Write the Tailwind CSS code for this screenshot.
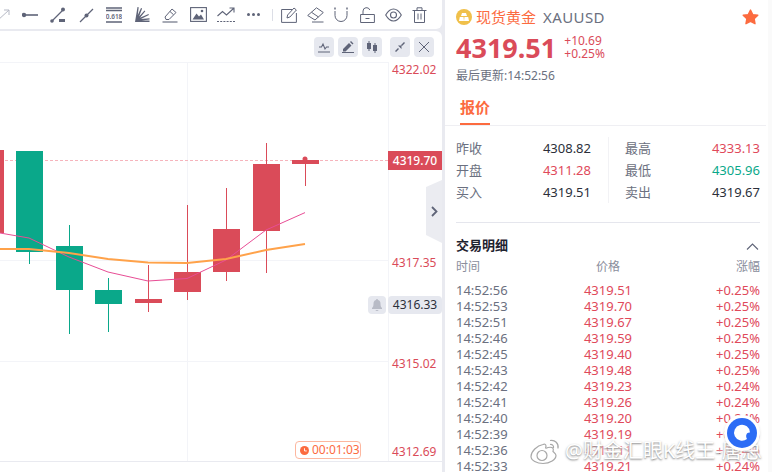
<!DOCTYPE html>
<html lang="zh">
<head>
    <meta charset="UTF-8">
    <title>XAUUSD</title>
    <script src="https://cdn.jsdelivr.net/npm/@tailwindcss/browser@4"></script>
</head>
<body class="w-[772px] h-[472px] overflow-hidden bg-[#fafafa] font-['Noto_Sans','Noto_Sans_CJK_SC',sans-serif]">
<div class="relative flex w-[772px] h-[472px] overflow-hidden">

    <!-- Left: toolbar + chart -->
    <div class="flex flex-col w-[445px] h-full bg-[#e9eaf0] pr-[3px] gap-[2px] shrink-0">
        <!-- Drawing toolbar -->
        <div class="flex items-center h-[29px] bg-white rounded-br-md text-[#5f6478] shrink-0">
            <svg class="w-[16px] h-[16px] ml-[-5px] mr-[5px] text-[#b5b8c4]" viewBox="0 0 16 16" fill="none" stroke="currentColor" stroke-width="1"><path d="M2 14 14 3M9 3h5v5"/></svg>
            <span class="flex justify-center w-[28px]"><svg class="w-[16px] h-[16px]" viewBox="0 0 16 16" fill="none" stroke="currentColor" stroke-width="1.6"><path d="M2 8h14"/><circle cx="2" cy="8" r="1.4" fill="currentColor"/></svg></span>
            <span class="flex justify-center w-[28px]"><svg class="w-[16px] h-[16px]" viewBox="0 0 16 16" fill="none" stroke="currentColor"><path d="M2 14 13 3" stroke-width="1.3"/><circle cx="13" cy="2.5" r="2" fill="currentColor" stroke="none"/><circle cx="2" cy="14" r="1.8" fill="currentColor" stroke="none"/><path d="M9 12h6v3H9z" fill="currentColor" stroke="none"/></svg></span>
            <span class="flex justify-center w-[28px]"><svg class="w-[16px] h-[16px]" viewBox="0 0 16 16" fill="none" stroke="currentColor" stroke-width="1.2"><path d="M2 15 15 2"/><circle cx="8.5" cy="8.5" r="2" fill="currentColor" stroke="none"/></svg></span>
            <span class="flex justify-center w-[28px]"><svg class="w-[16px] h-[16px]" viewBox="0 0 16 16" fill="none"><path d="M0 1h16M0 3.5h16M0 15h16" stroke="currentColor" stroke-width="1.4"/><text x="8" y="12" text-anchor="middle" font-size="6.4" font-weight="600" fill="currentColor" font-family="Noto Sans">0.618</text></svg></span>
            <span class="flex justify-center w-[28px]"><svg class="w-[16px] h-[16px]" viewBox="0 0 16 16" fill="currentColor"><path d="M1 15 3.500 0l1.200.2L3.800 8 7 1l1.100.5-3 8L10.500 3.500l.8.8-5.300 6.400L14.500 7l.4 1-8 4 8.600-.8.1 1.200-8.100 1.100H15.500V15z"/></svg></span>
            <span class="flex justify-center w-[28px]"><svg class="w-[16px] h-[16px]" viewBox="0 0 16 16" fill="none" stroke="currentColor" stroke-width="1"><path d="M3 10 10 2l4 3.500L7 12.500H4z"/><path d="m8 4.500 3.500 3.200" /><path d="M0.500 15h15" stroke-width="1.100"/></svg></span>
            <span class="flex justify-center w-[28px]"><svg class="w-[17px] h-[15px]" viewBox="0 0 17 15" fill="none"><rect x=".6" y=".6" width="15.800" height="13.800" stroke="currentColor" stroke-width="1.100"/><path d="m2.500 12.500 4-6 2.500 3 2-2 3 5z" fill="currentColor"/><circle cx="12" cy="4" r="1.300" fill="currentColor"/></svg></span>
            <span class="flex justify-center w-[28px]"><svg class="w-[18px] h-[16px]" viewBox="0 0 18 16" fill="none" stroke="currentColor" stroke-width="1.100"><path d="M0.500 9 5.500 4.500l4 3.500L16.500 1.500M12.500 1h4.500v4.500"/><path d="M0 14.500h18" stroke-dasharray="2 1.200"/></svg></span>
            <span class="flex justify-center items-center gap-[2px] w-[26px]"><i class="w-[3px] h-[3px] rounded-full bg-[#5f6478]"></i><i class="w-[3px] h-[3px] rounded-full bg-[#5f6478]"></i><i class="w-[3px] h-[3px] rounded-full bg-[#5f6478]"></i></span>
            <i class="w-px h-[12px] bg-[#dcdee6] ml-[6px] mr-[3px]"></i>
            <span class="flex justify-center w-[26px]"><svg class="w-[17px] h-[16px]" viewBox="0 0 17 16" fill="none" stroke="currentColor" stroke-width="1"><path d="M11 2.500H.6v12.900h14.800V6"/><path d="m6 11 .6-3L13 1l2.400 2-6.500 7z"/></svg></span>
            <span class="flex justify-center w-[26px]"><svg class="w-[17px] h-[16px]" viewBox="0 0 17 16" fill="none" stroke="currentColor" stroke-width="1"><path d="M.7 8.500 9.500.8l6.800 4.700-8.300 7.500z"/><path d="m4.500 5.300 7 4.700" /><path d="M5 15h11.500"/></svg></span>
            <span class="flex justify-center w-[26px]"><svg class="w-[14px] h-[15px]" viewBox="0 0 14 15" fill="none" stroke="currentColor" stroke-width="1"><path d="M1 4v4.500a6 6 0 0 0 12 0V4"/><path d="M1 .5v2M13 .5v2" stroke-width="1.400"/></svg></span>
            <span class="flex justify-center w-[26px]"><svg class="w-[15px] h-[16px]" viewBox="0 0 15 16" fill="none" stroke="currentColor" stroke-width="1"><path d="M.6 7.500h13.800v8H.6zM5.500 11.500h4"/><path d="M3 7.500V4a3.500 3.500 0 0 1 6.800-1"/></svg></span>
            <span class="flex justify-center w-[26px]"><svg class="w-[17px] h-[14px]" viewBox="0 0 17 14" fill="none" stroke="currentColor" stroke-width="1.100"><path d="M.7 7C3 3 5.500 1 8.500 1s5.500 2 7.800 6c-2.300 4-4.800 6-7.800 6S3 11 .7 7z"/><circle cx="8.500" cy="7" r="3"/></svg></span>
            <span class="flex justify-center w-[26px]"><svg class="w-[15px] h-[16px]" viewBox="0 0 15 16" fill="none" stroke="currentColor" stroke-width="1"><path d="M.5 3.500h14M5 3.500V.8h5v2.700M2.500 3.500v12h10v-12M6 6.500v6M9 6.500v6"/></svg></span>
        </div>

        <!-- Chart -->
        <div class="relative flex-1 bg-white rounded-tr-md">
            <svg class="absolute inset-0 w-[442px] h-[441px]" viewBox="0 31 442 441" fill="none">
                <path d="M0 62.500H388M0 260.500H388M0 361.500H388M187.500 62V461M388.500 62V461" stroke="#f3f4f8"/>
                <path d="M0 461.500H442" stroke="#e9eaf0"/>
                <path d="M0 160.500H388" stroke="#f6b4bc" stroke-dasharray="3 2"/>
                <!-- down candles -->
                <g fill="#0aa88a">
                    <rect x="16" y="151" width="27" height="101"/><rect x="29" y="252" width="1" height="12"/>
                    <rect x="56" y="246" width="27" height="44"/><rect x="69" y="225" width="1" height="109"/>
                    <rect x="95" y="290" width="27" height="14"/><rect x="108" y="278" width="1" height="54"/>
                </g>
                <!-- up candles -->
                <g fill="#da4b59">
                    <rect x="0" y="150" width="4" height="83"/>
                    <rect x="135" y="299" width="27" height="4"/><rect x="148" y="265" width="1" height="47"/>
                    <rect x="174" y="272" width="27" height="20"/><rect x="187" y="205" width="1" height="95"/>
                    <rect x="213" y="229" width="27" height="43"/><rect x="226" y="188" width="1" height="93"/>
                    <rect x="253" y="164" width="27" height="67"/><rect x="266" y="143" width="1" height="130"/>
                    <rect x="292" y="160" width="27" height="4"/><rect x="305" y="164" width="1" height="22"/>
                    <circle cx="305" cy="159" r="2.500"/>
                </g>
                <polyline points="0,233 29,238 69,257 108,272 148,281 187,278.500 226,260 266,230 305,212.600" stroke="#e84d95" stroke-width="1"/>
                <polyline points="0,249 29,249 69,253 108,259 148,262.500 187,263 226,259 266,250 305,244" stroke="#ffa24a" stroke-width="2"/>
            </svg>

            <!-- Chart buttons -->
            <div class="absolute top-[6px] right-[8px] flex gap-[4px]">
                <span class="flex items-center justify-center w-[20px] h-[20px] rounded bg-[#e6e8ef]"><svg class="w-[12px] h-[12px]" viewBox="0 0 12 12" fill="none" stroke="#5f6478" stroke-width="1.100"><path d="M1 6h2.500l1.500-3 2 5 1.500-2H11M0 11h12"/></svg></span>
                <span class="flex items-center justify-center w-[20px] h-[20px] rounded bg-[#e6e8ef]"><svg class="w-[12px] h-[12px]" viewBox="0 0 12 12" fill="#5f6478"><path d="m1 8 6-6 2.500 2.500-6 6H1zM8 1l1-1 2.500 2.500-1 1zM0 11h12v1H0z"/></svg></span>
                <span class="flex items-center justify-center w-[20px] h-[20px] rounded bg-[#e6e8ef] mr-[4px]"><svg class="w-[14px] h-[14px]" viewBox="0 0 14 14" fill="#5f6478"><path d="M2 3h4v6H2zM3.500 1h1v10h-1zM8 5h4v6H8zM9.500 3h1v10h-1z"/></svg></span>
                <span class="flex items-center justify-center w-[20px] h-[20px] rounded bg-[#e6e8ef]"><svg class="w-[12px] h-[12px]" viewBox="0 0 12 12" fill="#5f6478"><path d="m1 10 3-3 1 1-3 3zM4 4.500 7.500 8v-3.500zM11 2 8 5 7 4l3-3z"/></svg></span>
                <span class="flex items-center justify-center w-[20px] h-[20px] rounded bg-[#e6e8ef]"><svg class="w-[12px] h-[12px]" viewBox="0 0 12 12" fill="none" stroke="#5f6478" stroke-width="1"><path d="m1 1 10 10M11 1 1 11"/></svg></span>
            </div>

            <!-- Price axis -->
            <span class="absolute left-[392px] top-[30px] text-[12px] leading-[18px] text-[#da4b59]">4322.02</span>
            <span class="absolute left-[388px] top-[120px] w-[54px] h-[19px] bg-[#da4b59] text-white text-[12px] leading-[19px] text-center font-medium">4319.70</span>
            <span class="absolute left-[392px] top-[223px] text-[12px] leading-[18px] text-[#da4b59]">4317.35</span>
            <span class="absolute left-[368px] top-[265px] flex items-center justify-center w-[18px] h-[18px] rounded-sm bg-[#e6e8ef]"><svg class="w-[12px] h-[12px]" viewBox="0 0 12 12" fill="#b8bbc6"><path d="M6 0a1 1 0 0 1 1 1c2 .5 2.500 2 2.500 4 0 2 .5 3 1.500 4v1H1V9c1-1 1.500-2 1.500-4 0-2 .5-3.500 2.500-4a1 1 0 0 1 1-1zM4.500 11h3a1.500 1 0 0 1-3 0z"/></svg></span>
            <span class="absolute left-[388px] top-[265px] w-[54px] h-[18px] rounded-sm bg-[#e6e8ef] text-[#2b2f3a] text-[12px] leading-[18px] text-center">4316.33</span>
            <span class="absolute left-[392px] top-[324px] text-[12px] leading-[18px] text-[#da4b59]">4315.02</span>
            <span class="absolute left-[392px] top-[412px] text-[12px] leading-[18px] text-[#da4b59]">4312.69</span>

            <!-- Countdown -->
            <span class="absolute left-[295px] top-[410px] flex items-center gap-[3px] w-[66px] h-[18px] pl-[4px] border border-[#fdb79f] rounded-sm text-[12px] leading-none text-[#fc6b3f]">
                <svg class="w-[9px] h-[9px]" viewBox="0 0 10 10"><circle cx="5" cy="5" r="5" fill="#fc6b3f"/><path d="M5 2.500V5.500H7.500" stroke="#fff" fill="none"/></svg>00:01:03
            </span>

            <!-- Panel toggle -->
            <svg class="absolute left-[426px] top-[149px] w-[16px] h-[63px]" viewBox="0 0 16 63"><path d="M16 0 0 7v48l16 8z" fill="#ebecf1"/><path d="m6 27 4.500 4.500L6 36" fill="none" stroke="#5f6478" stroke-width="1.800"/></svg>
        </div>
    </div>

    <!-- Right panel -->
    <div class="flex flex-col w-[323px] h-full bg-white text-[13px] shrink-0 overflow-hidden">
        <div class="flex items-center justify-between h-[34px] pl-[11px] pr-[9px] shrink-0">
            <div class="flex items-center">
                <span class="flex items-center justify-center w-[16px] h-[16px] rounded-full bg-[#f0c04a] mr-[4px]"><svg class="w-[10px] h-[8px]" viewBox="0 0 10 8" fill="#fff"><path d="M3 0h4l1 3H2zM.8 4h3.700l.5 4H0zM5.500 4h3.700L10 8H5z"/></svg></span>
                <span class="text-[15px] leading-none text-[#fc6b3f]">现货黄金</span>
                <span class="ml-[7px] text-[15px] tracking-[0.4px] leading-none text-[#6b7080]">XAUUSD</span>
            </div>
            <svg class="w-[17px] h-[16px]" viewBox="0 0 24 23" fill="#fc6b3f" stroke="#fc6b3f" stroke-width="2" stroke-linejoin="round"><path d="M12 1.500 15.200 8l7.300 1-5.300 5 1.300 7.200-6.500-3.500-6.500 3.500L6.800 14 1.500 9l7.300-1z"/></svg>
        </div>
        <div class="flex items-center h-[30px] mt-[-2px] pl-[11px] shrink-0">
            <span class="text-[27px] leading-none font-bold text-[#da4b59]">4319.51</span>
            <div class="ml-[8px] flex flex-col text-[12px] leading-[13px] text-[#da4b59]"><span>+10.69</span><span>+0.25%</span></div>
        </div>
        <div class="h-[20px] pl-[11px] mt-[4px] text-[12px] leading-[20px] text-[#6b7080] shrink-0">最后更新:14:52:56</div>

        <!-- Tab -->
        <div class="h-[40px] border-b border-[#efeff3] pl-[15px] pt-[9px] mr-[2px] shrink-0">
            <span class="block w-[30px] h-[30px] border-b-2 border-[#fc6b3f] text-[15px] leading-[24px] font-bold text-[#fc6b3f]">报价</span>
        </div>

        <!-- Quote stats -->
        <div class="flex mt-[11px] pl-[11px] pr-[8px] shrink-0">
            <dl class="grid grid-cols-[auto_1fr] w-[135px] h-[66px] auto-rows-[22px] leading-[22px]">
                <dt class="text-[#6b7080]">昨收</dt><dd class="text-right text-[#2b2f3a]">4308.82</dd>
                <dt class="text-[#6b7080]">开盘</dt><dd class="text-right text-[#e0495a]">4311.28</dd>
                <dt class="text-[#6b7080]">买入</dt><dd class="text-right text-[#2b2f3a]">4319.51</dd>
            </dl>
            <i class="w-px h-[66px] ml-[17px] mr-[16px] bg-[#f2f2f5]"></i>
            <dl class="grid grid-cols-[auto_1fr] w-[135px] h-[66px] auto-rows-[22px] leading-[22px]">
                <dt class="text-[#6b7080]">最高</dt><dd class="text-right text-[#e0495a]">4333.13</dd>
                <dt class="text-[#6b7080]">最低</dt><dd class="text-right text-[#0aa88a]">4305.96</dd>
                <dt class="text-[#6b7080]">卖出</dt><dd class="text-right text-[#2b2f3a]">4319.67</dd>
            </dl>
        </div>
        <div class="h-px mt-[19px] ml-[11px] mr-[8px] bg-[#e5e6ed] shrink-0"></div>

        <!-- Trade details -->
        <div class="flex items-center justify-between h-[22px] mt-[12px] pl-[11px] pr-[9px] shrink-0">
            <span class="font-bold text-[#1f2330]">交易明细</span>
            <svg class="w-[13px] h-[7px]" viewBox="0 0 13 7" fill="none" stroke="#5f6478" stroke-width="1.100"><path d="m1 6.500 5.500-5.500L12 6.500"/></svg>
        </div>
        <div class="grid grid-cols-3 h-[20px] pl-[11px] pr-[8px] text-[12px] leading-[20px] text-[#8a8e9c] shrink-0">
            <span>时间</span><span class="text-center">价格</span><span class="text-right">涨幅</span>
        </div>
        <div id="trades" class="mt-[5px] pl-[11px] pr-[8px] shrink-0"></div>
    </div>

    <!-- Watermark -->
    <div class="absolute left-[530px] top-[437px] flex items-center text-[20px] leading-[28px] text-white [text-shadow:0_1px_2px_rgba(70,70,70,0.7),0_0_5px_rgba(255,255,255,1),0_0_5px_rgba(255,255,255,1)]">
        <svg class="w-[31px] h-[27px] mr-[4px]" viewBox="0 0 31 26" fill="#fff" stroke="#a8a8a8" stroke-width="1.200"><path d="M13 6C7 7 1 13 1 18c0 4 6 7 12 7 7 0 13-4 13-8 0-2-2-3-3-4 1-3 0-5-5-4-2 1-3 1-2-1 0-2-1-3-3-2z"/><circle cx="12" cy="17" r="5" fill="none"/><path d="M20 2c5-1 9 3 8 8M20 6c2-.5 4 1 3.500 3.500" fill="none"/></svg>
        <span>@财金汇眼K线王-唐总</span>
    </div>

    <!-- Floating button -->
    <div class="absolute left-[724px] top-[415px] flex items-center justify-center w-[36px] h-[36px] rounded-full bg-white shadow-sm">
        <svg class="w-[30px] h-[30px]" viewBox="0 0 30 30"><circle cx="15" cy="15" r="15" fill="#2c6cf5"/><path d="M20 21a8 8 0 1 1 3-6.500c-3-.5-5 2.500-3 6.500z" fill="#fff"/></svg>
    </div>
</div>

<script>
    // Trade rows
    var trades = [
        ['14:52:56', '4319.51', '+0.25%'], ['14:52:53', '4319.70', '+0.25%'], ['14:52:51', '4319.67', '+0.25%'],
        ['14:52:46', '4319.59', '+0.25%'], ['14:52:45', '4319.40', '+0.25%'], ['14:52:43', '4319.48', '+0.25%'],
        ['14:52:42', '4319.23', '+0.24%'], ['14:52:41', '4319.26', '+0.24%'], ['14:52:40', '4319.20', '+0.24%'],
        ['14:52:39', '4319.19', '+0.24%'], ['14:52:36', '4319.11', '+0.24%'], ['14:52:33', '4319.21', '+0.24%']
    ];
    document.getElementById('trades').innerHTML = trades.map(function (t) {
        return '<div class="grid grid-cols-3 h-[16px] leading-[16px]">' +
            '<span class="text-[#6b7080]">' + t[0] + '</span>' +
            '<span class="text-center text-[#e0495a]">' + t[1] + '</span>' +
            '<span class="text-right text-[#e0495a]">' + t[2] + '</span></div>';
    }).join('');
</script>
</body>
</html>
